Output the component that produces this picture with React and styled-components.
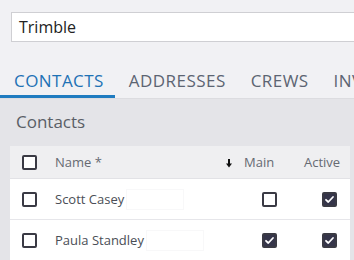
import React from "react";
import styled, { createGlobalStyle } from "styled-components";

const Global = createGlobalStyle`
  html, body { margin: 0; padding: 0; background: #f1f1f4; }
  body { font-family: "Open Sans", "Noto Sans", sans-serif; }
  * { box-sizing: border-box; }
`;

const Page = styled.div`
  width: 354px;
  height: 260px;
  overflow: hidden;
  background: #f1f1f4;
`;

const SearchWrap = styled.div`
  padding: 12px 0 0 11px;
`;

const SearchInput = styled.div`
  width: 360px;
  height: 30px;
  border: 1px solid #cfcfd3;
  background: #fff;
  display: flex;
  align-items: center;
  padding-left: 7px;
  font-size: 16px;
  color: #222;
`;

const TabBar = styled.div`
  margin-top: 22px;
  display: flex;
  border-bottom: 1px solid #dcdce0;
  white-space: nowrap;
`;

const Tab = styled.div`
  height: 34px;
  display: flex;
  align-items: center;
  padding: 2px 11px 0 14px;
  font-size: 17px;
  letter-spacing: 0.45px;
  color: ${(p) => (p.$active ? "#1e72b5" : "#5c6472")};
  border-bottom: 3px solid ${(p) => (p.$active ? "#1f7bc0" : "transparent")};
`;

const Section = styled.div`
  background: #e4e4e8;
  padding: 0 4px 0 10px;
  height: 200px;
`;

const Heading = styled.div`
  height: 47px;
  padding-left: 6px;
  padding-bottom: 2px;
  display: flex;
  align-items: center;
  font-size: 17px;
  color: #5a5e66;
`;

const Table = styled.div`
  background: #fff;
  width: 340px;
`;

const Row = styled.div`
  display: grid;
  grid-template-columns: 45px 185px 60px 50px;
  align-items: center;
  height: ${(p) => (p.$header ? 33 : 41)}px;
  background: ${(p) => (p.$header ? "#efeff1" : "#fff")};
  border-bottom: 1px solid ${(p) => (p.$header ? "#e2e2e6" : "#e6e6ea")};
  font-size: 13px;
  color: ${(p) => (p.$header ? "#666a72" : "#4a4e56")};
`;

const CheckCell = styled.div`
  padding-left: 12px;
  display: flex;
  align-items: center;
`;

const NameCell = styled.div`
  display: flex;
  align-items: center;
  justify-content: space-between;
  padding-right: 8px;
  white-space: nowrap;
`;

const NameText = styled.span`
  display: inline-flex;
  align-items: center;
`;

const Ghost = styled.span`
  display: inline-block;
  width: 58px;
  height: 21px;
  border: 1px solid #f8f8f9;
  margin-left: 2px;
`;

const ColHead = styled.div`
  padding-left: 4px;
`;

const BoxCell = styled.div`
  padding-left: 22px;
  display: flex;
  align-items: center;
`;

const Box = styled.span`
  width: 15px;
  height: 15px;
  border-radius: 2px;
  border: 2px solid #3a3a44;
  background: ${(p) => (p.$checked ? "#35354a" : "#fff")};
  display: inline-flex;
  align-items: center;
  justify-content: center;
`;

const Check = ({ checked }) => (
  <Box $checked={checked}>
    {checked && (
      <svg width="11" height="11" viewBox="0 0 11 11">
        <path d="M2 5.8 L4.3 8 L9 3" fill="none" stroke="#fff" strokeWidth="1.8" strokeLinecap="round" strokeLinejoin="round" />
      </svg>
    )}
  </Box>
);

const SortIcon = () => (
  <svg width="6" height="9" viewBox="0 0 6 9" style={{ marginTop: 2 }}>
    <rect x="2" y="0" width="2" height="5" fill="#111" />
    <path d="M0 4.5 L6 4.5 L3 8.5 Z" fill="#111" />
  </svg>
);

const rows = [
  { name: "Scott Casey", main: false, active: true },
  { name: "Paula Standley", main: true, active: true },
];

export default function App() {
  return (
    <Page>
      <Global />
      <SearchWrap>
        <SearchInput>Trimble</SearchInput>
      </SearchWrap>
      <TabBar>
        <Tab $active>CONTACTS</Tab>
        <Tab>ADDRESSES</Tab>
        <Tab>CREWS</Tab>
        <Tab>INVOICES</Tab>
      </TabBar>
      <Section>
        <Heading>Contacts</Heading>
        <Table>
          <Row $header>
            <CheckCell><Check /></CheckCell>
            <NameCell>
              <span>Name *</span>
              <SortIcon />
            </NameCell>
            <ColHead>Main</ColHead>
            <ColHead>Active</ColHead>
          </Row>
          {rows.map((r) => (
            <Row key={r.name}>
              <CheckCell><Check /></CheckCell>
              <NameCell>
                <NameText>{r.name}<Ghost /></NameText>
              </NameCell>
              <BoxCell><Check checked={r.main} /></BoxCell>
              <BoxCell><Check checked={r.active} /></BoxCell>
            </Row>
          ))}
        </Table>
      </Section>
    </Page>
  );
}
